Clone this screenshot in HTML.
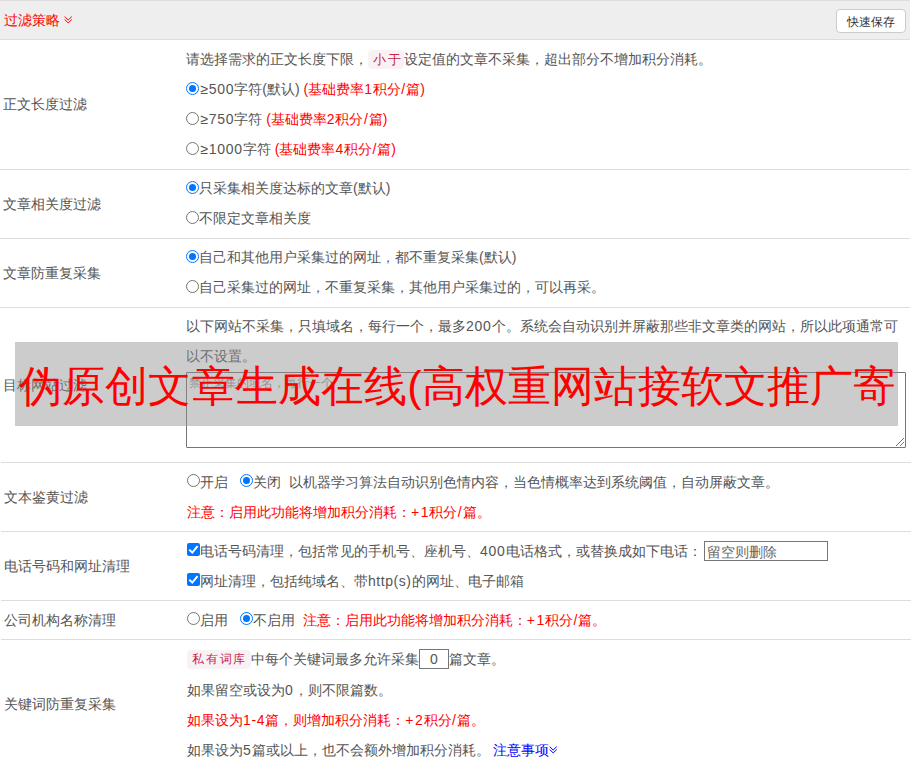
<!DOCTYPE html>
<html><head><meta charset="utf-8">
<style>
html,body{margin:0;padding:0;background:#fff;}
body{width:912px;height:768px;overflow:hidden;position:relative;font-family:"Liberation Sans",sans-serif;font-size:14px;color:#555;}
b{font-weight:normal;}
.d{letter-spacing:.75px;}
.p{letter-spacing:1.5px;}
.s{padding-left:.5px;letter-spacing:1px;}
.g{padding-left:1.5px;letter-spacing:.5px;}
.m{letter-spacing:.5px;}
.hdr{position:absolute;left:0;top:0;width:910px;height:38px;background:#eee;border-top:1px solid #ddd;border-bottom:1px solid #ddd;}
.hl{position:absolute;left:0;width:910px;height:1px;background:#ddd;}
.hl2{left:1px;}
.t{position:absolute;white-space:nowrap;line-height:20px;}
.r{color:#f00;}
.code{display:inline-block;box-sizing:border-box;color:#c7254e;background:#f9f2f4;border-radius:4px;height:19px;line-height:19px;font-size:13px;letter-spacing:2px;padding-left:5px;vertical-align:top;margin-top:1px;}
.radio{position:absolute;width:11px;height:11px;border:1px solid #767676;border-radius:50%;background:#fff;}
.radio.on{border-color:#0075ff;}
.radio.on::after{content:"";position:absolute;left:2px;top:2px;width:7px;height:7px;border-radius:50%;background:#0075ff;}
.chk{position:absolute;width:13px;height:13px;border-radius:2px;background:#0075ff;}
.chk svg{position:absolute;left:0;top:0;}
.btn{position:absolute;left:836px;top:9px;width:68px;height:22px;border:1px solid #ccc;border-radius:4px;background:#fff;font-size:12px;color:#333;text-align:center;line-height:25px;}
.ta{position:absolute;left:186px;top:372px;width:718px;height:74px;border:1px solid #767676;border-radius:1px;background:#fff;}
.inp{position:absolute;left:704px;top:541px;width:122px;height:18px;border:1px solid #767676;background:#fff;}
.wm{position:absolute;left:15px;top:342px;width:883px;height:84px;background:rgba(142,142,142,0.45);}
.wmt{position:absolute;left:19px;top:361px;font-size:43.4px;letter-spacing:.14px;line-height:50px;color:#f00;white-space:nowrap;}
</style></head><body>
<div class="hdr"></div>
<div class="t r" style="left:4px;top:10px">过滤策略</div>
<svg style="position:absolute;left:64px;top:16px" width="9" height="9" viewBox="0 0 9 9"><path d="M0.6 0.6 L4.2 4 L7.8 0.6 M0.6 3.5 L4.2 6.9 L7.8 3.5" fill="none" stroke="#f00" stroke-width="1"/></svg>
<div class="btn">快速保存</div>
<div class="hl" style="top:169px"></div>
<div class="hl" style="top:238px"></div>
<div class="hl" style="top:307px"></div>
<div class="hl hl2" style="top:462px"></div>
<div class="hl hl2" style="top:531px"></div>
<div class="hl hl2" style="top:600px"></div>
<div class="hl hl2" style="top:639px"></div>
<div class="t" style="left:3px;top:94px;">正文长度过滤</div>
<div class="t" style="left:186px;top:49px;">请选择需求的正文长度下限，<span class="code" style="width:36px">小于</span>设定值的文章不采集，超出部分不增加积分消耗。</div>
<div class="radio on" style="left:186px;top:82px"></div>
<div class="t" style="left:199px;top:79px;"><b class="g">≥</b><b class="d">500</b>字符(默认) <span class="r">(基础费率<b class="d">1</b>积分<b class="s">/</b>篇)</span></div>
<div class="radio" style="left:186px;top:112px"></div>
<div class="t" style="left:199px;top:109px;"><b class="g">≥</b><b class="d">750</b>字符 <span class="r">(基础费率<b class="d">2</b>积分<b class="s">/</b>篇)</span></div>
<div class="radio" style="left:186px;top:142px"></div>
<div class="t" style="left:199px;top:139px;"><b class="g">≥</b><b class="d">1000</b>字符 <span class="r">(基础费率<b class="d">4</b>积分<b class="s">/</b>篇)</span></div>
<div class="t" style="left:3px;top:194px;">文章相关度过滤</div>
<div class="radio on" style="left:186px;top:181px"></div>
<div class="t" style="left:199px;top:178px;">只采集相关度达标的文章(默认)</div>
<div class="radio" style="left:186px;top:211px"></div>
<div class="t" style="left:199px;top:208px;">不限定文章相关度</div>
<div class="t" style="left:3px;top:263px;">文章防重复采集</div>
<div class="radio on" style="left:186px;top:250px"></div>
<div class="t" style="left:199px;top:247px;">自己和其他用户采集过的网址，都不重复采集(默认)</div>
<div class="radio" style="left:186px;top:280px"></div>
<div class="t" style="left:199px;top:277px;">自己采集过的网址，不重复采集，其他用户采集过的，可以再采。</div>
<div class="t" style="left:3px;top:375px;">目标网站过滤</div>
<div class="t" style="left:186px;top:316px;">以下网站不采集，只填域名，每行一个，最多<b class="d">200</b>个。系统会自动识别并屏蔽那些非文章类的网站，所以此项通常可</div>
<div class="t" style="left:186px;top:346px;">以不设置。</div>
<div class="ta"></div>
<svg style="position:absolute;left:0;top:0" width="912" height="768" fill="#777"><rect x="896" y="445" width="1" height="1"/><rect x="897" y="444" width="1" height="1"/><rect x="898" y="443" width="1" height="1"/><rect x="899" y="442" width="1" height="1"/><rect x="900" y="441" width="1" height="1"/><rect x="901" y="440" width="1" height="1"/><rect x="902" y="439" width="1" height="1"/><rect x="903" y="438" width="1" height="1"/><rect x="900" y="445" width="1" height="1"/><rect x="901" y="444" width="1" height="1"/><rect x="902" y="443" width="1" height="1"/><rect x="903" y="442" width="1" height="1"/></svg>
<div class="t" style="left:189px;top:373px;font-size:12px;color:#999">禁止采集的域名，每行一个</div>
<div class="t" style="left:4px;top:487px;">文本鉴黄过滤</div>
<div class="radio" style="left:187px;top:474px"></div>
<div class="t" style="left:200px;top:472px;">开启</div>
<div class="radio on" style="left:240px;top:474px"></div>
<div class="t" style="left:253px;top:472px;">关闭 &nbsp;以机器学习算法自动识别色情内容，当色情概率达到系统阈值，自动屏蔽文章。</div>
<div class="t" style="left:187px;top:502px;"><span class="r">注意：启用此功能将增加积分消耗：<b class="p">+</b><b class="d">1</b>积分<b class="s">/</b>篇。</span></div>
<div class="t" style="left:4px;top:556px;">电话号码和网址清理</div>
<div class="chk" style="left:187px;top:543px"><svg width="13" height="13" viewBox="0 0 13 13"><path d="M2.3 6.6 L5.3 9.6 L10.6 3.2" fill="none" stroke="#fff" stroke-width="2"/></svg></div>
<div class="t" style="left:200px;top:541px;">电话号码清理，包括常见的手机号、座机号、<b class="d">400</b>电话格式，或替换成如下电话：</div>
<div class="inp"></div>
<div class="t" style="left:707px;top:542px;color:#666">留空则删除</div>
<div class="chk" style="left:187px;top:573px"><svg width="13" height="13" viewBox="0 0 13 13"><path d="M2.3 6.6 L5.3 9.6 L10.6 3.2" fill="none" stroke="#fff" stroke-width="2"/></svg></div>
<div class="t" style="left:200px;top:571px;">网址清理，包括纯域名、带<b style="letter-spacing:.55px">http(s)</b>的网址、电子邮箱</div>
<div class="t" style="left:4px;top:610px;">公司机构名称清理</div>
<div class="radio" style="left:187px;top:612px"></div>
<div class="t" style="left:200px;top:610px;">启用</div>
<div class="radio on" style="left:240px;top:612px"></div>
<div class="t" style="left:253px;top:610px;">不启用 &nbsp;<span class="r">注意：启用此功能将增加积分消耗：<b class="p">+</b><b class="d">1</b>积分<b class="s">/</b>篇。</span></div>
<div class="t" style="left:4px;top:694px;">关键词防重复采集</div>
<div class="t" style="left:187px;top:649px;"><span class="code" style="width:64px;font-size:12px;letter-spacing:1.8px;padding-left:5px">私有词库</span>中每个关键词最多允许采集</div>
<div class="inp" style="left:419px;top:649px;width:28px;height:18px"></div>
<div class="t" style="left:430px;top:649px;"><b class="d">0</b></div>
<div class="t" style="left:449px;top:649px;">篇文章。</div>
<div class="t" style="left:187px;top:680px;">如果留空或设为<b class="d">0</b>，则不限篇数。</div>
<div class="t" style="left:187px;top:710px;"><span class="r">如果设为<b class="d">1</b><b class="m">-</b><b class="d">4</b>篇，则增加积分消耗：<b class="p">+</b><b class="d">2</b>积分<b class="s">/</b>篇。</span></div>
<div class="t" style="left:187px;top:740px;">如果设为<b class="d">5</b>篇或以上，也不会额外增加积分消耗。 <span style="color:#00f">注意事项</span></div>
<svg style="position:absolute;left:549px;top:746px" width="9" height="9" viewBox="0 0 9 9"><path d="M0.6 0.6 L4.2 4 L7.8 0.6 M0.6 3.5 L4.2 6.9 L7.8 3.5" fill="none" stroke="#00f" stroke-width="1"/></svg>
<div class="wm"></div>
<div class="wmt">伪原创文章生成在线(高权重网站接软文推广寄</div>
</body></html>
